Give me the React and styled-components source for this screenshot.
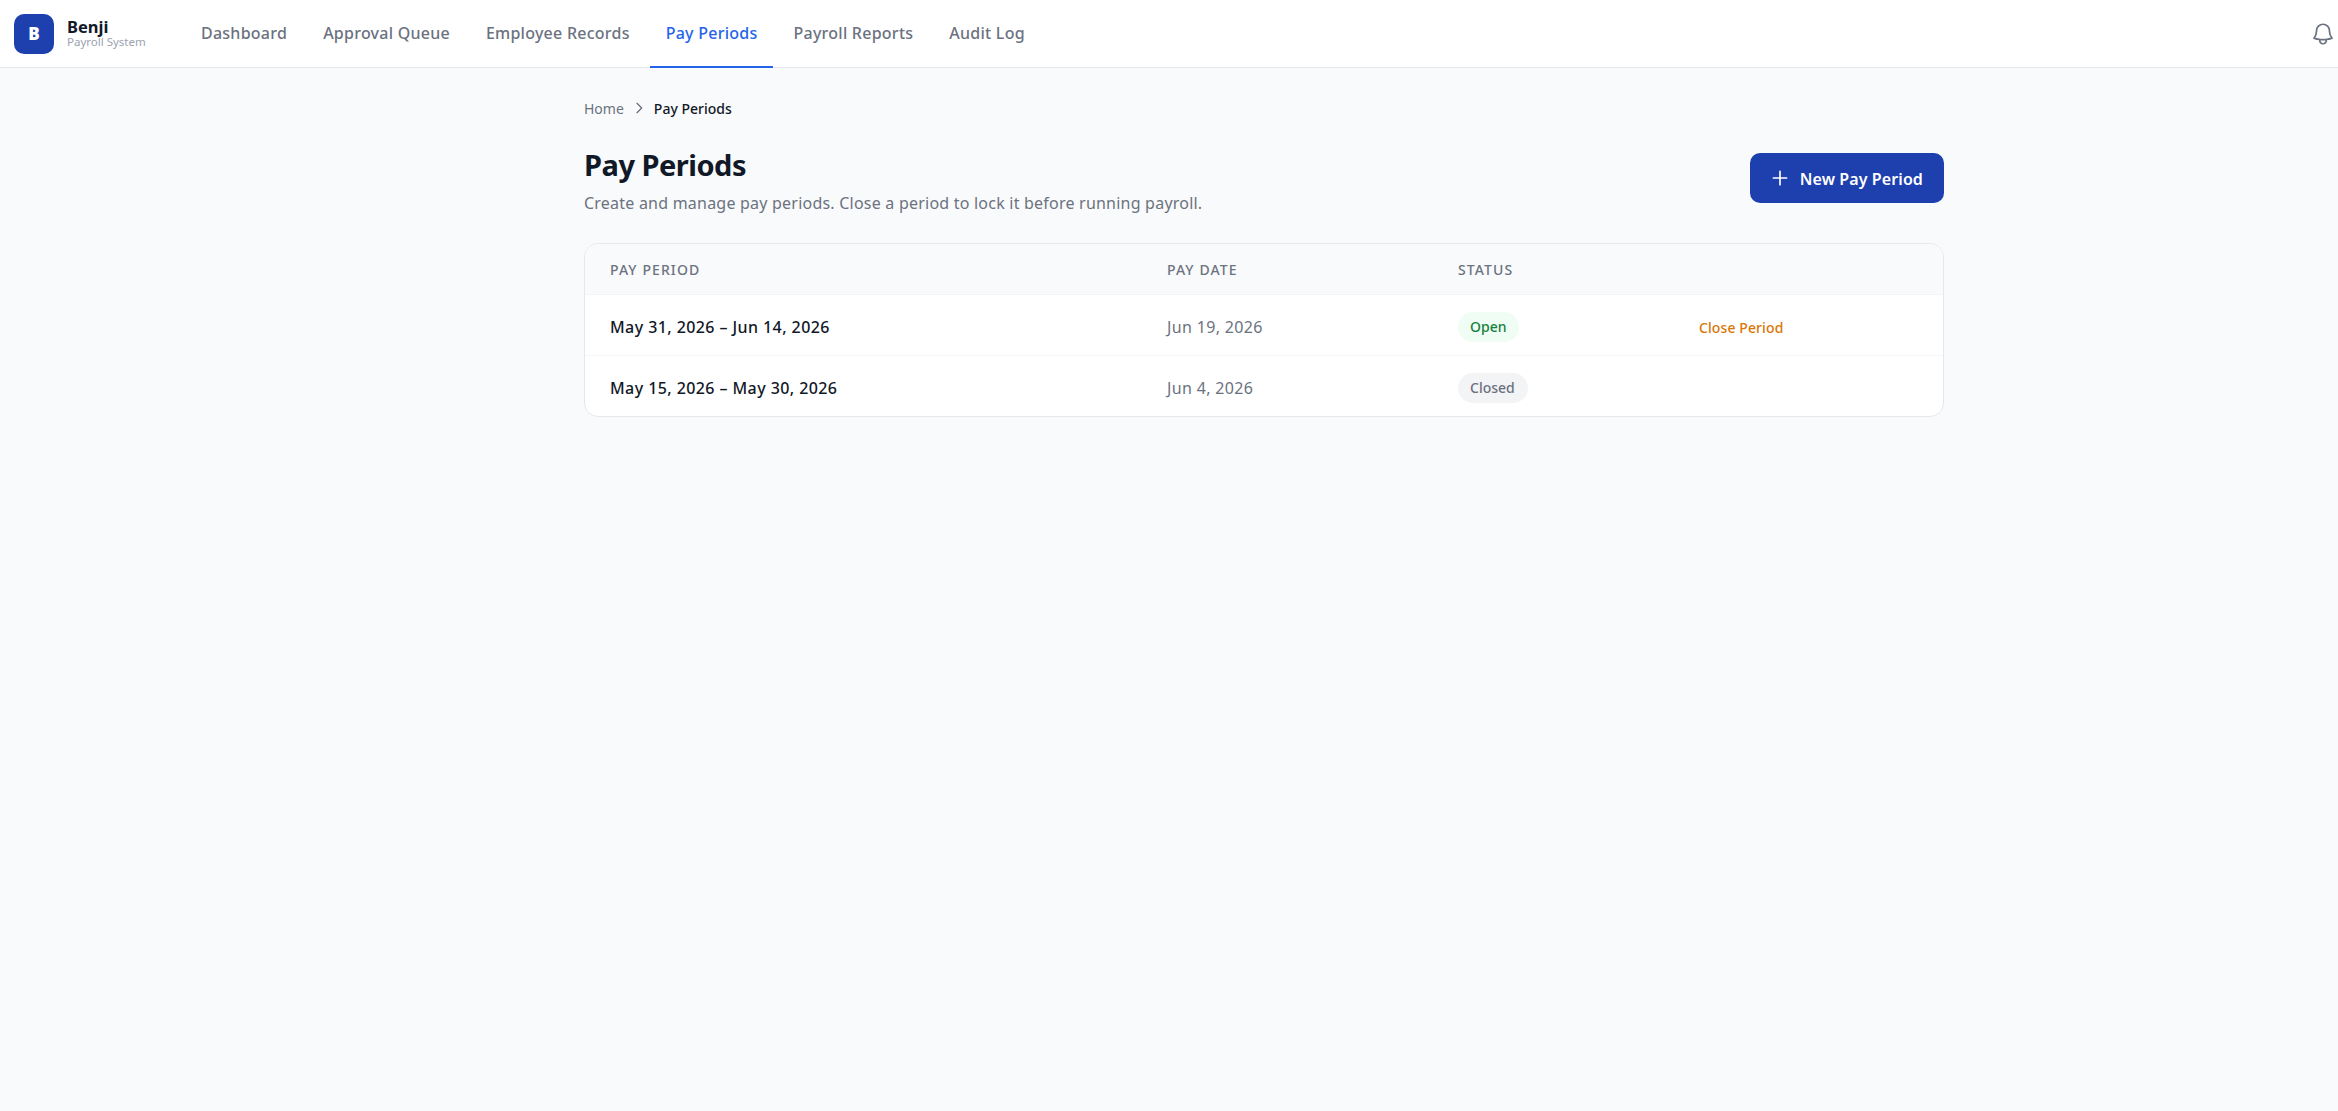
import React from "react";
import styled, { createGlobalStyle } from "styled-components";

const GlobalStyle = createGlobalStyle`
  * { box-sizing: border-box; }
  html, body { margin: 0; padding: 0; }
  body {
    background: #f9fafb;
    font-family: "Noto Sans", "Open Sans", sans-serif;
    color: #111827;
  }
`;

const Page = styled.div`
  min-height: 100vh;
  background: #f9fafb;
`;

const Navbar = styled.header`
  display: flex;
  align-items: stretch;
  height: 68px;
  padding: 0 14px;
  background: #ffffff;
  border-bottom: 1px solid #e5e7eb;
`;

const Brand = styled.div`
  display: flex;
  align-items: center;
  gap: 13px;
  width: 171px;
`;

const Logo = styled.div`
  display: flex;
  align-items: center;
  justify-content: center;
  flex-shrink: 0;
  width: 40px;
  height: 40px;
  border-radius: 10px;
  background: #1e40af;
  color: #ffffff;
  font-size: 17px;
  font-weight: 900;
`;

const BrandText = styled.div`
  display: flex;
  flex-direction: column;
  margin-top: -1px;
`;

const BrandName = styled.span`
  font-size: 16.5px;
  line-height: 17px;
  font-weight: 700;
  color: #111827;
`;

const BrandSub = styled.span`
  font-size: 11.5px;
  line-height: 13px;
  color: #9ca3af;
`;

const NavList = styled.nav`
  display: flex;
  align-items: stretch;
  gap: 4px;
  flex: 1;
`;

const NavItem = styled.a`
  display: flex;
  align-items: center;
  padding: 0 16px;
  margin-bottom: -1px;
  font-size: 16px;
  font-weight: 500;
  letter-spacing: 0.25px;
  color: ${({ $active }) => ($active ? "#2563eb" : "#6b7280")};
  border-bottom: 2px solid ${({ $active }) => ($active ? "#2563eb" : "transparent")};
  cursor: pointer;
`;

const BellButton = styled.button`
  align-self: center;
  display: flex;
  padding: 0;
  margin-right: -12px;
  border: 0;
  background: none;
  color: #6b7280;
  cursor: pointer;
`;

const Main = styled.main`
  width: 1360px;
  margin-left: 584px;
  padding-top: 30px;
`;

const Breadcrumb = styled.div`
  display: flex;
  align-items: center;
  gap: 7px;
  height: 20px;
  font-size: 14px;
`;

const CrumbLink = styled.span`
  color: #6b7280;
`;

const CrumbCurrent = styled.span`
  font-weight: 500;
  color: #111827;
`;

const CrumbIcon = styled.svg`
  width: 16px;
  height: 16px;
  color: #6b7280;
`;

const PageHeader = styled.div`
  display: flex;
  align-items: flex-start;
  justify-content: space-between;
  margin-top: 35px;
`;

const Title = styled.h1`
  margin: 0;
  font-size: 29px;
  line-height: 24px;
  font-weight: 700;
  letter-spacing: -0.5px;
  color: #111827;
`;

const Subtitle = styled.p`
  margin: 14px 0 0;
  font-size: 16px;
  line-height: 24px;
  letter-spacing: 0.22px;
  color: #6b7280;
`;

const PrimaryButton = styled.button`
  display: flex;
  align-items: center;
  gap: 10px;
  height: 50px;
  padding: 0 21px 0 20px;
  border: 0;
  border-radius: 10px;
  background: #1e40af;
  color: #ffffff;
  font-family: inherit;
  font-size: 16px;
  font-weight: 600;
  letter-spacing: 0.1px;
  cursor: pointer;
`;

const ButtonLabel = styled.span`
  padding-top: 2px;
`;

const TableCard = styled.div`
  margin-top: 28px;
  background: #ffffff;
  border: 1px solid #e5e7eb;
  border-radius: 14px;
  overflow: hidden;
`;

const Table = styled.table`
  width: 100%;
  table-layout: fixed;
  border-collapse: separate;
  border-spacing: 0;
`;

const HeadCell = styled.th`
  width: ${({ $width }) => $width || "auto"};
  height: 51px;
  padding: 0 25px;
  background: #f9fafb;
  border-bottom: 1px solid #f3f4f6;
  text-align: left;
  font-size: 14px;
  font-weight: 500;
  letter-spacing: 1.1px;
  text-transform: uppercase;
  color: #6b7280;
`;

const Row = styled.tr`
  &:not(:last-child) td {
    height: 61px;
    border-bottom: 1px solid #f5f6f8;
  }
`;

const Cell = styled.td`
  height: 60px;
  padding: 4px 25px 0;
  font-size: 16px;
  font-weight: ${({ $strong }) => ($strong ? 500 : 400)};
  letter-spacing: ${({ $strong }) => ($strong ? "0.42px" : "0.35px")};
  color: ${({ $strong }) => ($strong ? "#111827" : "#6b7280")};
`;

const Badge = styled.span`
  display: inline-block;
  padding: 0 13px 0 12px;
  border-radius: 999px;
  font-size: 14px;
  line-height: 30px;
  font-weight: 500;
  letter-spacing: 0;
  background: ${({ $status }) => ($status === "Open" ? "#f0fdf4" : "#f3f4f6")};
  color: ${({ $status }) => ($status === "Open" ? "#15803d" : "#6b7280")};
`;

const ClosePeriod = styled.a`
  font-size: 14px;
  font-weight: 500;
  letter-spacing: 0.1px;
  color: #d97706;
  cursor: pointer;
`;

const navItems = ["Dashboard", "Approval Queue", "Employee Records", "Pay Periods", "Payroll Reports", "Audit Log"];

const periods = [
  { range: "May 31, 2026 – Jun 14, 2026", payDate: "Jun 19, 2026", status: "Open" },
  { range: "May 15, 2026 – May 30, 2026", payDate: "Jun 4, 2026", status: "Closed" },
];

const App = () => (
  <Page>
    <GlobalStyle />
    <Navbar>
      <Brand>
        <Logo>B</Logo>
        <BrandText>
          <BrandName>Benji</BrandName>
          <BrandSub>Payroll System</BrandSub>
        </BrandText>
      </Brand>
      <NavList>
        {navItems.map((item) => (
          <NavItem key={item} $active={item === "Pay Periods"}>{item}</NavItem>
        ))}
      </NavList>
      <BellButton aria-label="Notifications">
        <svg width="26" height="26" viewBox="0 0 24 24" fill="none" stroke="currentColor" strokeWidth="1.6" strokeLinecap="round" strokeLinejoin="round">
          <path d="M14.857 17.082a23.848 23.848 0 0 0 5.454-1.31A8.967 8.967 0 0 1 18 9.75V9A6 6 0 0 0 6 9v.75a8.967 8.967 0 0 1-2.312 6.022c1.733.64 3.56 1.085 5.455 1.31m5.714 0a24.255 24.255 0 0 1-5.714 0m5.714 0a3 3 0 1 1-5.714 0" />
        </svg>
      </BellButton>
    </Navbar>
    <Main>
      <Breadcrumb>
        <CrumbLink>Home</CrumbLink>
        <CrumbIcon viewBox="0 0 24 24" fill="none" stroke="currentColor" strokeWidth="2" strokeLinecap="round" strokeLinejoin="round">
          <path d="M9 5l7 7-7 7" />
        </CrumbIcon>
        <CrumbCurrent>Pay Periods</CrumbCurrent>
      </Breadcrumb>
      <PageHeader>
        <div>
          <Title>Pay Periods</Title>
          <Subtitle>Create and manage pay periods. Close a period to lock it before running payroll.</Subtitle>
        </div>
        <PrimaryButton>
          <svg width="20" height="20" viewBox="0 0 24 24" fill="none" stroke="currentColor" strokeWidth="2" strokeLinecap="round">
            <path d="M12 4v16M4 12h16" />
          </svg>
          <ButtonLabel>New Pay Period</ButtonLabel>
        </PrimaryButton>
      </PageHeader>
      <TableCard>
        <Table>
          <thead>
            <tr>
              <HeadCell $width="557px">Pay Period</HeadCell>
              <HeadCell $width="291px">Pay Date</HeadCell>
              <HeadCell $width="241px">Status</HeadCell>
              <HeadCell />
            </tr>
          </thead>
          <tbody>
            {periods.map((period) => (
              <Row key={period.range}>
                <Cell $strong>{period.range}</Cell>
                <Cell>{period.payDate}</Cell>
                <Cell><Badge $status={period.status}>{period.status}</Badge></Cell>
                <Cell>{period.status === "Open" && <ClosePeriod>Close Period</ClosePeriod>}</Cell>
              </Row>
            ))}
          </tbody>
        </Table>
      </TableCard>
    </Main>
  </Page>
);

export default App;
